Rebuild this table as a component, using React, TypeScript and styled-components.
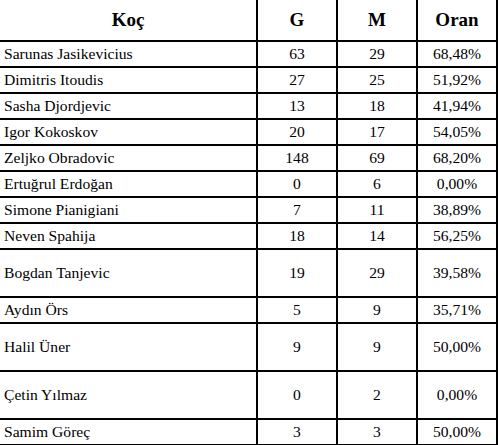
import styled, { createGlobalStyle } from 'styled-components';

const GlobalStyle = createGlobalStyle`
  html, body {
    margin: 0;
    padding: 0;
    background: #ffffff;
    overflow: hidden;
  }
`;

const Table = styled.div`
  width: 498px;
  display: flex;
  flex-direction: column;
  background: #ffffff;
  color: #000000;
`;

const Row = styled.div<{ $tall?: boolean }>`
  display: grid;
  grid-template-columns: 256px 80px 80px 80px;
  height: ${(p) => (p.$tall ? 46 : 24)}px;
  border-right: 2px solid #000;
  border-bottom: 2px solid #000;
`;

const HeadRow = styled(Row)`
  height: 40px;
`;

const HeadCell = styled.div`
  display: flex;
  align-items: center;
  justify-content: center;
  border-left: 2px solid #000;
  font-family: "Liberation Serif", serif;
  font-size: 19px;
  font-weight: bold;
  white-space: nowrap;

  &:first-child {
    border-left: none;
  }
`;

const NameCell = styled.div`
  display: flex;
  align-items: center;
  padding-left: 4px;
  font-family: "Liberation Serif", serif;
  font-size: 15.6px;
  white-space: nowrap;
`;

const NumCell = styled.div`
  display: flex;
  align-items: center;
  justify-content: center;
  border-left: 2px solid #000;
  font-family: "Liberation Serif", serif;
  font-size: 15.6px;
  white-space: nowrap;
`;

type Coach = { name: string; g: number; m: number; rate: string; tall?: boolean };

const coaches: Coach[] = [
  { name: 'Sarunas Jasikevicius', g: 63, m: 29, rate: '68,48%' },
  { name: 'Dimitris Itoudis', g: 27, m: 25, rate: '51,92%' },
  { name: 'Sasha Djordjevic', g: 13, m: 18, rate: '41,94%' },
  { name: 'Igor Kokoskov', g: 20, m: 17, rate: '54,05%' },
  { name: 'Zeljko Obradovic', g: 148, m: 69, rate: '68,20%' },
  { name: 'Ertuğrul Erdoğan', g: 0, m: 6, rate: '0,00%' },
  { name: 'Simone Pianigiani', g: 7, m: 11, rate: '38,89%' },
  { name: 'Neven Spahija', g: 18, m: 14, rate: '56,25%' },
  { name: 'Bogdan Tanjevic', g: 19, m: 29, rate: '39,58%', tall: true },
  { name: 'Aydın Örs', g: 5, m: 9, rate: '35,71%' },
  { name: 'Halil Üner', g: 9, m: 9, rate: '50,00%', tall: true },
  { name: 'Çetin Yılmaz', g: 0, m: 2, rate: '0,00%', tall: true },
  { name: 'Samim Göreç', g: 3, m: 3, rate: '50,00%' },
];

export default function App() {
  return (
    <>
      <GlobalStyle />
      <Table>
        <HeadRow>
          <HeadCell>Koç</HeadCell>
          <HeadCell>G</HeadCell>
          <HeadCell>M</HeadCell>
          <HeadCell>Oran</HeadCell>
        </HeadRow>
        {coaches.map((c) => (
          <Row key={c.name} $tall={c.tall}>
            <NameCell>{c.name}</NameCell>
            <NumCell>{c.g}</NumCell>
            <NumCell>{c.m}</NumCell>
            <NumCell>{c.rate}</NumCell>
          </Row>
        ))}
      </Table>
    </>
  );
}
